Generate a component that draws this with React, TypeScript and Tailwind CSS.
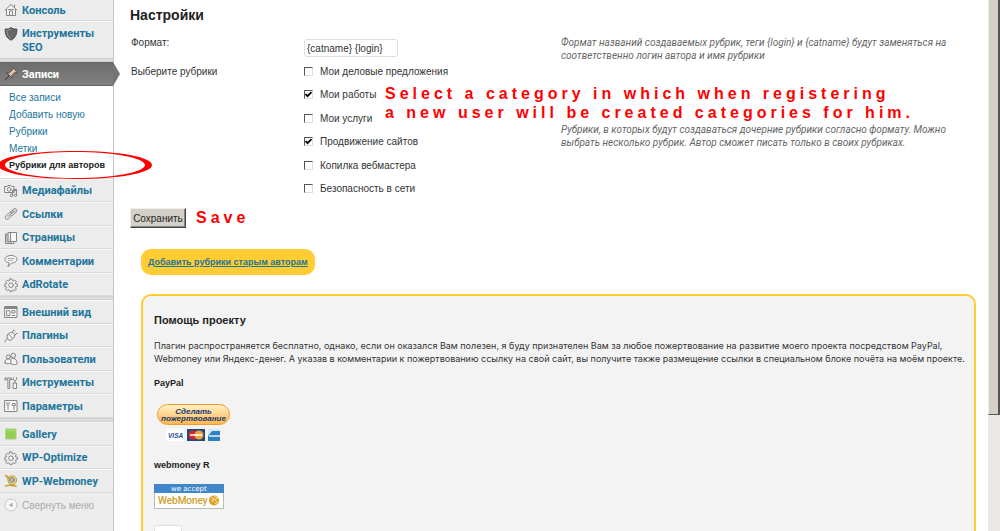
import type { ReactNode } from "react";

const stroke = {
  fill: "none",
  stroke: "#858585",
  strokeWidth: 1,
  strokeLinecap: "round" as const,
  strokeLinejoin: "round" as const,
};

function Icon({ children }: { children: ReactNode }) {
  return (
    <svg viewBox="0 0 14 14" className="size-3.5 shrink-0" aria-hidden="true" {...stroke}>
      {children}
    </svg>
  );
}

const Home = () => (
  <Icon>
    <path d="M1 7.2 7 1.5l6 5.7M2.5 6.5v6h9v-6M10.5 2v2.500" fill="#f8f8f8" />
    <path d="M5.500 12.500V8h3v4.500M4.500 6.500h5" />
  </Icon>
);
const Shield = () => (
  <Icon>
    <path d="M7 .8C5.500 2 3.500 2.200 1.200 2c-.3 5 1.300 8.800 5.800 11.200C11.500 10.800 13.100 7 12.800 2 10.500 2.200 8.500 2 7 .8Z" fill="#666" stroke="#4a4a4a" />
    <path d="M7 2.300C5.600 3.200 4.200 3.300 2.700 3.300c0 3.700 1.400 6.500 4.300 8.400" stroke="#999" />
  </Icon>
);
const Pin = () => (
  <Icon>
    <path d="M1 13 5.500 8.500" stroke="#333" />
    <path d="m3 6 2.500-.3L8.500 3l-.7-1.500 1.200-.7 4.200 4-.8 1.200-1.500-.5-2.700 3L8 11 3 6Z" fill="#d9b6ab" stroke="#5e4640" />
    <path d="m6.500 6.500 3-3" stroke="#fff3ee" />
  </Icon>
);
const Media = () => (
  <Icon>
    <path d="M1 2.500h2l.7-1h3l.7 1H10v6H1z" fill="#f6f6f6" />
    <circle cx="5.200" cy="5.400" r="1.900" />
    <path d="M8.500 11V6l4-.8v5.500M8.500 7.200l4-.8" />
    <circle cx="7.500" cy="11.500" r="1.200" fill="#ddd" />
    <circle cx="11.500" cy="11.300" r="1.200" fill="#ddd" />
  </Icon>
);
const LinkIcon = () => (
  <Icon>
    <path d="M6.500 5 9.300 2.200c2-1.800 4.700.6 3 2.700L9.500 7.700c-1 .9-2.200.8-3 .1M7.500 9l-2.800 2.800C2.600 13.500.1 11.100 1.800 9l2.700-2.800c1-.9 2.200-.8 3-.1M4.500 9.500l5-5" />
    <path d="M7.500 5.500 10 3.200c.8-.7 1.800.2 1.200 1L8.800 6.500M5.700 8l-2.500 2.200" stroke="#aaa" />
  </Icon>
);
const Pages = () => (
  <Icon>
    <path d="M4.500 1.500h8v9h-8zM3 3H1.500v9.500H10V11" fill="#f7f7f7" />
    <path d="M6.500 1.500v9M3 3v8h4.500" />
  </Icon>
);
const Comment = () => (
  <Icon>
    <path d="M7 1.500c3.300 0 6 1.500 6 3.800S10.500 9 7.500 9L4 12.800 5 8.900C2.700 8.500 1 7.200 1 5.300c0-2.300 2.700-3.800 6-3.800Z" fill="#f7f7f7" />
    <path d="M4 4.500h6M4 6.300h5" stroke="#aaa" />
  </Icon>
);
const Gear = () => (
  <Icon>
    <path d="M5.900 1h2.200l.3 1.600 1 .4 1.400-.9 1.500 1.500-.9 1.400.4 1 1.600.3v2.200l-1.600.3-.4 1 .9 1.400-1.500 1.500-1.400-.9-1 .4-.3 1.200H5.900l-.3-1.200-1-.4-1.400.9-1.500-1.500.9-1.400-.4-1L.7 8.500V6.300L2.200 6l.4-1-.9-1.400 1.500-1.500L4.600 3l1-.4L5.900 1Z" fill="#eee" />
    <circle cx="7" cy="7.200" r="2.300" fill="#f8f8f8" />
  </Icon>
);
const Layout = () => (
  <Icon>
    <path d="M1 1.500h12v11H1z" fill="#f8f8f8" />
    <path d="M1 3.500h12M3 5.700h3v5H3zM8.200 5.700H11V8H8.200zM8.200 10.500H11" />
    <path d="M1.500 2.500h11" />
  </Icon>
);
const Plug = () => (
  <Icon>
    <path d="M1 13c.2-2 1-3 2.700-3.300M3.500 6 5 4.500C6.700 3 8.400 3 9.800 4.400c1.300 1.300 1.200 3-.3 4.600L8 10.500c-1.500 1.200-3 .9-4-.2-1.100-1.200-1.500-2.900-.5-4.300Z" fill="#eee" />
    <path d="m7.500 3.500 2.300-2.300M10.500 6.500l2.300-2.300M5 5.500l3.500 3.500M9.500 1l1 1M12.500 4l.7.7" />
  </Icon>
);
const Users = () => (
  <Icon>
    <circle cx="9.300" cy="3.500" r="2.300" fill="#eee" />
    <path d="M6.500 11.500c-.8-4 .5-5 2.800-5 2.500 0 4 2 3.700 5.500-2 1-4.500 1-6.500-.5Z" fill="#f3f3f3" />
    <circle cx="4.300" cy="4.800" r="2" fill="#eee" />
    <path d="M1 11c-.2-3 1-4 3.300-4 2.200 0 3 1.500 2.700 4-2 1-4 1-6 0Z" fill="#f3f3f3" />
  </Icon>
);
const Tools = () => (
  <Icon>
    <path d="M1 4V2h6l1.500 1.500H5.700v9H3.900v-9H2.500z" fill="#eee" />
    <path d="M9.500 7h3v5.500h-3zM11 7V4.500M9.500 1.500c-.8 2 .2 3 1.500 3s2.300-1 1.500-3" fill="#f5f5f5" />
  </Icon>
);
const Settings = () => (
  <Icon>
    <path d="M1 1.500h12v11H1z" fill="#f8f8f8" />
    <path d="M4 6.500v4M3 3.500v2l1 1 1-1v-2M10 6.500v4M8.800 4.500h2.400v2H8.800z" />
  </Icon>
);
const GalleryIcon = () => (
  <Icon>
    <path d="M2 2h10v10H2z" fill="#92d050" stroke="#a9cf86" />
    <path d="M2.500 3.500h9" stroke="#a6dd6a" />
  </Icon>
);
const Money = () => (
  <Icon>
    <path d="M4 4.500C6 .5 12.500 1 12.500 6c0 4-3 5-5.500 4.500C4.500 10 3.500 7 4 4.500Z" fill="#efd57a" stroke="#b8963d" />
    <circle cx="8" cy="6" r="2.300" fill="#b7c1c9" stroke="#77808a" />
    <path d="M1.500 1.500 5 4M1.500 12c3-1.500 7-.5 10.500.2" stroke="#c89d32" strokeWidth="1.600" />
  </Icon>
);
const Collapse = () => (
  <Icon>
    <circle cx="7" cy="7" r="6" fill="#f7f7f7" stroke="#c8c8c8" />
    <path d="M8.500 4.700v4.600L4.800 7z" fill="#aaa" stroke="none" />
  </Icon>
);

type Item = { label: string; icon: () => ReactNode };

const groups: Item[][] = [
  [
    { label: "Медиафайлы", icon: Media },
    { label: "Ссылки", icon: LinkIcon },
    { label: "Страницы", icon: Pages },
    { label: "Комментарии", icon: Comment },
    { label: "AdRotate", icon: Gear },
  ],
  [
    { label: "Внешний вид", icon: Layout },
    { label: "Плагины", icon: Plug },
    { label: "Пользователи", icon: Users },
    { label: "Инструменты", icon: Tools },
    { label: "Параметры", icon: Settings },
  ],
  [
    { label: "Gallery", icon: GalleryIcon },
    { label: "WP-Optimize", icon: Gear },
    { label: "WP-Webmoney", icon: Money },
  ],
];

const submenu = ["Все записи", "Добавить новую", "Рубрики", "Метки"];

const categories = [
  { label: "Мои деловые предложения", checked: false },
  { label: "Мои работы", checked: true },
  { label: "Мои услуги", checked: false },
  { label: "Продвижение сайтов", checked: true },
  { label: "Копилка вебмастера", checked: false },
  { label: "Безопасность в сети", checked: false },
];

function Separator() {
  return <li className="h-1 border-y border-[#d0d0d0] bg-[#dedede]" role="separator" />;
}

function Sidebar() {
  return (
    <nav className="relative w-[114px] shrink-0 border-r border-[#c6c6c6] bg-[#ececec] font-[Roboto,sans-serif] text-[11px] font-bold text-[#21759b]">
      <ul>
        <li className="border-b border-[#dadada]">
          <a href="#console" className="flex h-5 items-center gap-1 pl-1">
            <Home />Консоль
          </a>
        </li>
        <li>
          <a href="#seo" className="flex h-[37px] gap-1 border-t border-[#f8f8f8] pt-[5px] pl-1 leading-[14px]">
            <Shield />
            <span>Инструменты SEO</span>
          </a>
        </li>
        <Separator />
        <li>
          <a
            href="#posts"
            className="relative flex h-6 items-center gap-1 border-y border-[#666] bg-linear-to-b from-[#6d6d6d] to-[#808080] pl-1 text-white"
          >
            <Pin />Записи
            <svg viewBox="0 0 7 24" className="absolute -top-px left-full h-6 w-[7px]" aria-hidden="true">
              <path d="M0 0l7 12-7 12z" fill="#747474" />
            </svg>
          </a>
          <ul className="border-b border-[#dadada] bg-white pt-[3px] pb-1 font-['Liberation_Sans',Arial,sans-serif] text-[10px] leading-[17px] font-normal">
            {submenu.map((s) => (
              <li key={s}>
                <a href="#posts" className="block pl-[9px]">{s}</a>
              </li>
            ))}
            <li className="relative">
              <a href="#authors" className="block pl-[9px] text-[9px] font-bold whitespace-nowrap text-[#222]">Рубрики для авторов</a>
              <svg viewBox="0 0 154 28" className="absolute -top-1.5 -left-0.5 z-10 h-7 w-[154px]" aria-hidden="true">
                <path
                  fillRule="evenodd"
                  fill="#f00"
                  d="M0 14C0 6 33 0 77 0s77 6 77 14-33 14-77 14S0 22 0 14Zm7 0c0 7 31 13 70 13s70-6 70-13S116 1 77 1 7 7 7 14Z"
                />
              </svg>
            </li>
          </ul>
        </li>
      </ul>
      {groups.map((g, i) => (
        <ul key={i}>
          {i > 0 && <Separator />}
          {g.map(({ label, icon: Glyph }) => (
            <li key={label} className="h-[23px] border-b border-[#dadada] even:h-6">
              <a href="#menu" className="flex h-full items-center gap-1 border-t border-[#f8f8f8] pl-1 whitespace-nowrap">
                <Glyph />{label}
              </a>
            </li>
          ))}
        </ul>
      ))}
      <button type="button" className="flex h-6 items-center gap-1 pl-1 font-['Liberation_Sans',Arial,sans-serif] text-[10px] font-normal text-[#aaa]">
        <Collapse />Свернуть меню
      </button>
    </nav>
  );
}

function Cards() {
  return (
    <svg viewBox="0 0 55 12" className="mt-1 ml-3 h-3 w-[55px]" role="img" aria-label="Visa, MasterCard, American Express">
      <rect width="18" height="12" fill="#fff" />
      <text x="2" y="8.500" fontFamily="Liberation Sans, sans-serif" fontSize="6.500" fontWeight="bold" fontStyle="italic" fill="#1b4b91">VISA</text>
      <rect x="21" width="18" height="12" fill="#24477f" />
      <circle cx="27" cy="6" r="4.500" fill="#d8262e" />
      <circle cx="33" cy="6" r="4.500" fill="#f0a23c" />
      <path d="M24 6h12" stroke="#fff" strokeWidth="1.500" />
      <rect x="42" width="12" height="12" fill="#2d82c4" />
      <path d="M42 0h12v2H46l-4 5z" fill="#d3e9f6" />
      <path d="M43 7h11" stroke="#e6f3fb" strokeWidth="1.500" />
    </svg>
  );
}

function WebMoney() {
  return (
    <svg viewBox="0 0 70 25" className="h-[25px] w-[70px]" role="img" aria-label="we accept WebMoney">
      <rect x=".5" y=".5" width="69" height="24" fill="#fff" stroke="#b9b9b9" />
      <rect width="70" height="9" fill="#3f87c9" />
      <text x="17" y="7" fontFamily="DejaVu Sans, sans-serif" fontSize="7" fill="#fff">we accept</text>
      <text x="4" y="20" fontFamily="Roboto, sans-serif" fontSize="10" fill="#d19a1c" stroke="#d19a1c" strokeWidth=".2">WebMoney</text>
      <circle cx="60" cy="16.500" r="5" fill="#dc9f24" />
      <path d="M57.500 13.500l3 1.500-3 1.500 3 1.500M60.500 12.500l3 1.500-2.500 2 2.500 2-2.500 2" fill="none" stroke="#fff1c9" strokeWidth=".8" />
    </svg>
  );
}

export default function App() {
  return (
    <div className="flex h-screen overflow-hidden bg-white font-['Liberation_Sans',Arial,sans-serif] text-[10px] leading-[13px] text-[#333]">
      <Sidebar />
      <main className="relative min-w-0 flex-1 pr-3 pl-4">
        <h2 className="pt-1.5 text-[14px] leading-[18px] font-bold text-[#222]">Настройки</h2>
        <form className="mt-3">
          <div className="grid grid-cols-[173px_257px_1fr] items-start pl-px">
            <label htmlFor="format">Формат:</label>
            <input
              id="format"
              defaultValue="{catname} {login}"
              className="mt-[3px] h-[18px] w-[94px] rounded-[3px] border border-[#dfdfdf] bg-white px-0.5"
            />
            <p className="max-w-[402px] font-[Roboto,sans-serif] text-[#666] italic">
              {"Формат названий создаваемых рубрик, теги {login} и {catname} будут заменяться на соответственно логин автора и имя рубрики"}
            </p>
          </div>
          <div className="mt-px grid grid-cols-[173px_257px_1fr] items-start pl-px">
            <div className="pt-0.5">Выберите рубрики</div>
            <div>
              {categories.map((c) => (
                <label key={c.label} className="flex h-6 items-start gap-[7px] pt-0.5 odd:h-[23px]">
                  <input
                    type="checkbox"
                    defaultChecked={c.checked}
                    className="peer mt-0.5 grid size-[9px] shrink-0 appearance-none border border-t-[#555] border-r-[#ddd] border-b-[#ddd] border-l-[#555] bg-white"
                  />
                  <svg viewBox="0 0 9 9" className="pointer-events-none -ml-4 mt-0.5 hidden size-[9px] shrink-0 peer-checked:block" aria-hidden="true">
                    <path d="M1.500 4l2 2.200 4-4" fill="none" stroke="#000" strokeWidth="1.800" />
                  </svg>
                  {c.label}
                </label>
              ))}
            </div>
            <p className="max-w-[402px] pt-[60px] font-[Roboto,sans-serif] text-[#666] italic">
              Рубрики, в которых будут создаваться дочерние рубрики согласно формату. Можно выбрать несколько рубрик. Автор сможет писать только в своих рубриках.
            </p>
          </div>
          <div className="mt-1 flex items-center gap-2.5">
            <button
              type="button"
              className="h-5 w-14 border border-t-[#eee] border-r-[#444] border-b-[#444] border-l-[#eee] bg-[#d4d0c8] text-[#222] shadow-[inset_-1px_-1px_#888]"
            >
              Сохранить
            </button>
            <strong className="text-[16px] leading-5 tracking-[4px] text-[#f00]">Save</strong>
          </div>
        </form>
        <p className="absolute top-[84px] left-[271px] text-[16px] leading-[19px] font-bold tracking-[4px] whitespace-nowrap text-[#f00]">
          Select a category in which when registering
          <br />a new user will be created categories for him.
        </p>
        <a
          href="#add"
          className="mt-[21px] ml-[11px] inline-block rounded-[10px] bg-[#ffcc33] px-[7px] py-1.5 text-[9px] leading-[14px] font-bold text-[#21759b] underline"
        >
          Добавить рубрики старым авторам
        </a>
        <section className="mt-[19px] ml-[11px] h-96 rounded-[10px] border-2 border-[#ffcc33] bg-[#f3f3f3] pt-[17px] pr-1.5 pl-[11px]">
          <h3 className="text-[11px] leading-[14px] font-bold text-[#222]">Помощь проекту</h3>
          <p className="mt-3 font-[Inter,'Liberation_Sans',sans-serif] text-[9px]">
            Плагин распространяется бесплатно, однако, если он оказался Вам полезен, я буду признателен Вам за любое пожертвование на развитие моего проекта посредством PayPal, Webmoney или Яндекс-денег. А указав в комментарии к пожертвованию ссылку на свой сайт, вы получите также размещение ссылки в специальном блоке почёта на моём проекте.
          </p>
          <h4 className="mt-3 text-[9px] font-bold text-[#222]">PayPal</h4>
          <button
            type="button"
            className="mt-3.5 ml-[3px] block h-[21px] w-[73px] rounded-full border border-[#f29a31] bg-linear-to-b from-[#fff0c5] to-[#ffb84b] text-[8px] leading-[7px] font-bold text-[#17366b] italic"
          >
            Сделать
            <br />
            <span className="-mx-2">пожертвование</span>
          </button>
          <Cards />
          <h4 className="mt-[18px] text-[9px] font-bold text-[#222]">webmoney R</h4>
          <div className="mt-3"><WebMoney /></div>
          <input aria-label="Сумма" className="mt-4 h-5 w-7 rounded-[3px] border border-[#dfdfdf] bg-white" />
        </section>
      </main>
      <div className="w-3 shrink-0 bg-[#ebe9e5]" aria-hidden="true">
        <div className="h-[415px] border-r-2 border-b border-l border-[#555] border-l-[#eee] bg-[#d4d0c8]" />
      </div>
    </div>
  );
}
